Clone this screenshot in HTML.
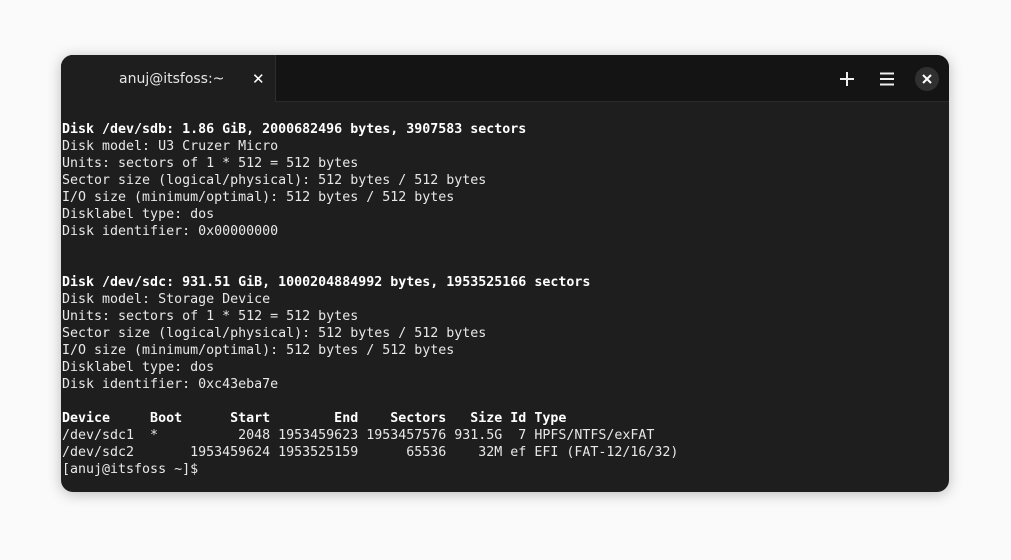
<!DOCTYPE html>
<html><head><style>
html,body{margin:0;padding:0;width:1011px;height:560px;background:#fafafa;overflow:hidden}
.win{position:absolute;left:61px;top:55px;width:888px;height:437px;background:#1e1e1e;border-radius:12px;overflow:hidden;box-shadow:0 2px 14px rgba(0,0,0,.25)}
.hdr{position:absolute;left:0;top:0;width:888px;height:46px;background:#141414;border-bottom:1px solid #2a2a2a}
.tab{position:absolute;left:0;top:0;width:214px;height:47px;background:#1e1e1e;border-right:1px solid #2e2e2e}
.tab .t{position:absolute;left:58px;top:16px;font:14px "DejaVu Sans","Liberation Sans",sans-serif;color:#e6e6e6}
.tab .x{position:absolute;left:191px;top:15px;font:bold 15px "DejaVu Sans",sans-serif;color:#fff}
pre{position:absolute;left:1px;top:66px;margin:0;font:13.3px/17px "DejaVu Sans Mono","Liberation Mono",monospace;color:#e8e8e8}
b{font-weight:bold;color:#fff}
.cb{position:absolute;left:854px;top:12px;width:24px;height:24px;border-radius:50%;background:#303030}
</style></head><body>
<div class="win">
<div class="hdr">
<div class="tab"><span class="t">anuj@itsfoss:~</span><span class="x">✕</span></div>
<svg style="position:absolute;left:778px;top:16px" width="16" height="16"><path d="M8 1V15M1 8H15" stroke="#eee" stroke-width="2"/></svg>
<svg style="position:absolute;left:818px;top:16px" width="16" height="16"><path d="M1 2.5H15M1 8H15M1 13.5H15" stroke="#eee" stroke-width="2"/></svg>
<div class="cb"><svg style="position:absolute;left:7px;top:7px" width="10" height="10"><path d="M1 1L9 9M9 1L1 9" stroke="#fff" stroke-width="2"/></svg></div>
</div>
<pre><b>Disk /dev/sdb: 1.86 GiB, 2000682496 bytes, 3907583 sectors</b>
Disk model: U3 Cruzer Micro
Units: sectors of 1 * 512 = 512 bytes
Sector size (logical/physical): 512 bytes / 512 bytes
I/O size (minimum/optimal): 512 bytes / 512 bytes
Disklabel type: dos
Disk identifier: 0x00000000


<b>Disk /dev/sdc: 931.51 GiB, 1000204884992 bytes, 1953525166 sectors</b>
Disk model: Storage Device
Units: sectors of 1 * 512 = 512 bytes
Sector size (logical/physical): 512 bytes / 512 bytes
I/O size (minimum/optimal): 512 bytes / 512 bytes
Disklabel type: dos
Disk identifier: 0xc43eba7e

<b>Device     Boot      Start        End    Sectors   Size Id Type</b>
/dev/sdc1  *          2048 1953459623 1953457576 931.5G  7 HPFS/NTFS/exFAT
/dev/sdc2       1953459624 1953525159      65536    32M ef EFI (FAT-12/16/32)
[anuj@itsfoss ~]$</pre>
</div>
</body></html>
